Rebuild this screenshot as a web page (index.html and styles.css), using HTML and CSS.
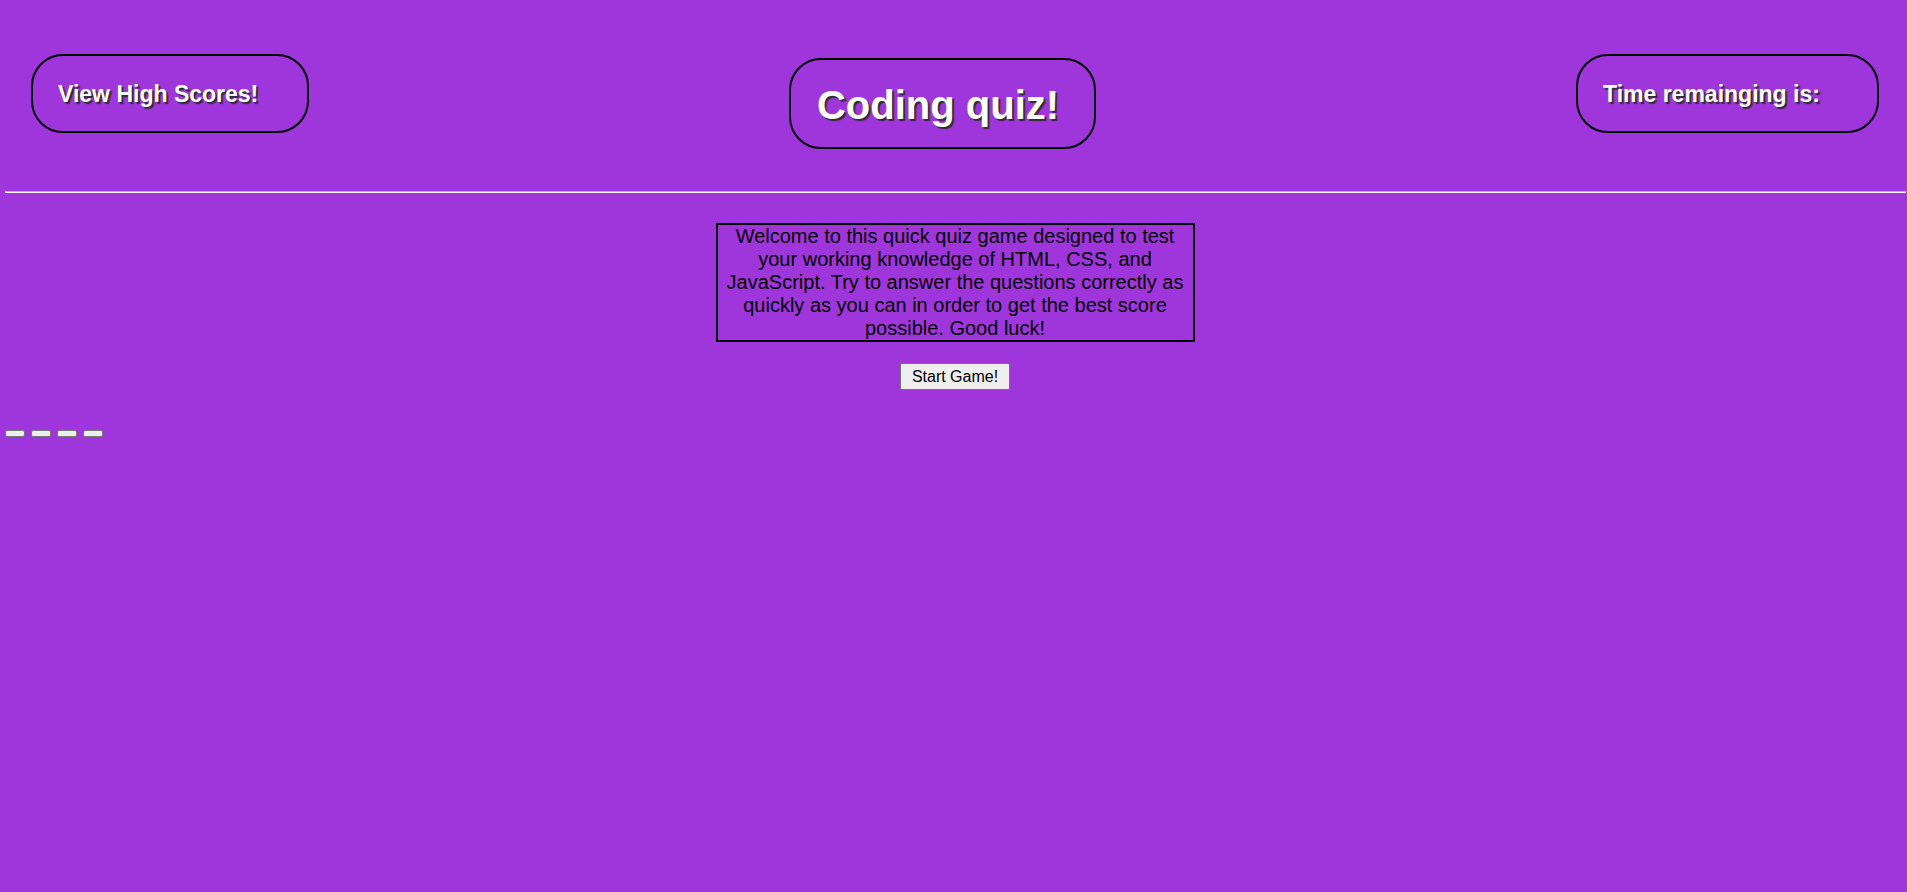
FILE: index.html
```html
<!DOCTYPE html>
<html lang="en">
<head>
<meta charset="utf-8">
<title>Coding quiz!</title>
<link rel="stylesheet" href="styles.css">
</head>
<body>
<header class="top">
  <div class="pill pill-side pill-scores">View High Scores!</div>
  <h1 class="pill pill-title">Coding quiz!</h1>
  <div class="pill pill-side pill-time">Time remainging is:</div>
</header>
<hr class="rule">
<main class="main">
  <p class="intro">Welcome to this quick quiz game designed to test your working knowledge of HTML, CSS, and JavaScript. Try to answer the questions correctly as quickly as you can in order to get the best score possible. Good luck!</p>
  <div class="start-row"><button class="start-btn" type="button">Start Game!</button></div>
  <div class="answers">
    <button class="answer-btn" type="button"></button>
    <button class="answer-btn" type="button"></button>
    <button class="answer-btn" type="button"></button>
    <button class="answer-btn" type="button"></button>
  </div>
</main>
</body>
</html>
```
FILE: styles.css
```css
* { box-sizing: border-box; }

body {
  margin: 0;
  background: #9e36dc;
  font-family: "Liberation Sans", Arial, sans-serif;
  min-height: 892px;
}

.top {
  display: flex;
  justify-content: space-between;
  align-items: flex-start;
  padding: 0 28px 0 31px;
  height: 191px;
}

.pill {
  border: 2px solid #000;
  border-radius: 32px;
  color: #fff;
  font-weight: bold;
  text-shadow: 2px 2px 1px #2e2e2e;
  margin: 0;
}

.pill-side {
  margin-top: 54px;
  font-size: 23px;
  line-height: 26px;
  padding: 25px 0 24px 25px;
}

.pill-scores { width: 278px; }
.pill-time { width: 303px; }

.pill-title {
  margin-top: 58px;
  font-size: 40px;
  line-height: 46px;
  padding: 22px 35px 19px 26px;
}

.rule {
  margin: 0 1px 0 5px;
  border: 0;
  border-top: 1px solid #b9b9b9;
  border-bottom: 1px solid #f4f4f4;
  height: 0;
}

.main {
  padding: 0 0 0 3px;
}

.intro {
  width: 479px;
  margin: 30px auto 0;
  border: 2px solid #000;
  font-size: 20px;
  line-height: 23px;
  text-align: center;
  color: #000;
}

.start-row {
  margin-top: 21px;
  text-align: center;
}

.start-btn {
  font-family: "Liberation Sans", Arial, sans-serif;
  font-size: 16px;
  line-height: 19px;
  padding: 3px 11px;
  height: 27px;
  background: #efefef;
  border: 1px solid #767676;
  border-radius: 2px;
  color: #000;
}

.answers {
  display: flex;
  gap: 6px;
  margin: 40px 0 0 2px;
}

.answer-btn {
  width: 20px;
  height: 7px;
  padding: 0;
  background: #efefef;
  border: 1px solid #767676;
  border-radius: 2px;
}
```
